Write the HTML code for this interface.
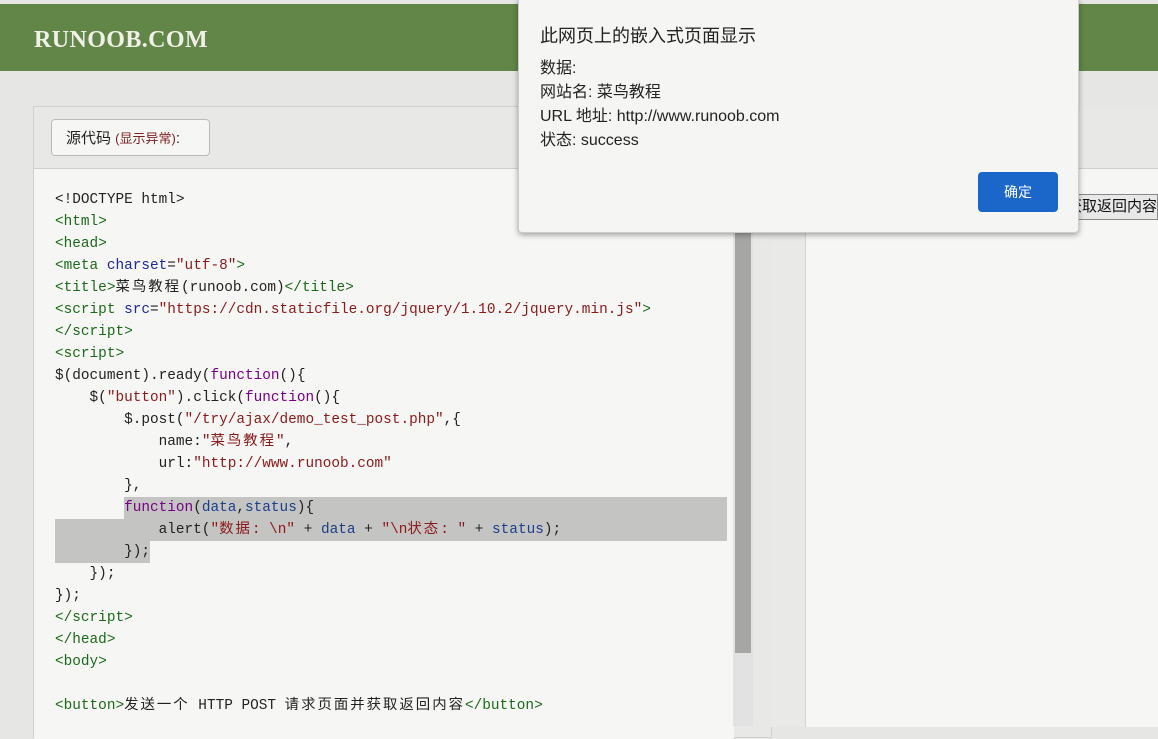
<!DOCTYPE html>
<html><head><meta charset="utf-8"><style>
body{margin:0;width:1158px;height:726px;overflow:hidden;background:#e6e6e4;position:relative;font-family:"Liberation Sans","Noto Sans CJK SC",sans-serif}
.hdr{position:absolute;left:0;top:4px;width:1158px;height:67px;background:#618647}
.logo{position:absolute;left:34px;top:23px;color:#f0f0e8;font:900 24px "Liberation Serif","Noto Serif CJK SC",serif;letter-spacing:0.4px}
.lp{position:absolute;left:33px;top:106px;width:737px;height:630px;border:1px solid #d0d0ce;background:#e8e8e6}
.lhead{position:absolute;left:0;top:0;width:737px;height:61px;border-bottom:1px solid #d0d0ce}
.btn{position:absolute;left:17px;top:12px;width:159px;height:37px;border:1px solid #bbb;border-radius:4px;background:#f6f6f4;font-size:15px;line-height:37px;padding-left:14px;box-sizing:border-box;color:#222}
.btn span{color:#7a1f1f;font-size:13px}
.code{position:absolute;left:0;top:62px;width:700px;height:570px;background:#f6f6f4}
pre{position:absolute;left:22px;top:21px;margin:0;font:14.4px/22px "Liberation Mono","Noto Sans CJK SC",monospace;color:#222}
.c{letter-spacing:2px}
.t{color:#1b6a1b}.a{color:#1b2a9a}.s{color:#8b1a1a}.k{color:#770088}.v{color:#1b3f8a}
.hl{position:absolute;background:#c4c4c2}
.sb{position:absolute;left:733px;top:168px;width:20px;height:558px;background:#e2e2e2}
.th{position:absolute;left:735px;top:228px;width:16px;height:425px;background:#a6a6a4}
.band{position:absolute;left:771px;top:107px;width:34px;height:620px;background:#e9e9e7;border-right:1px solid #d4d4d2}
.rp{position:absolute;left:806px;top:107px;width:352px;height:620px;background:#f6f6f4}
.rph{position:absolute;left:806px;top:107px;width:352px;height:61px;background:#e8e8e6;border-bottom:1px solid #d0d0ce}
.rb{position:absolute;left:1000px;top:194px;width:156px;height:24px;border:1px solid #888;background:#e8e8e8;font-size:15px;line-height:24px;color:#111;white-space:nowrap;overflow:hidden;direction:rtl;text-align:right}
.dlg{position:absolute;left:518px;top:-2px;width:559px;height:233px;background:#f5f5f3;border:1px solid #ccc;border-radius:0 0 4px 4px;box-shadow:0 2px 6px rgba(0,0,0,.35)}
.dt{position:absolute;left:21px;top:23px;font-size:18px;color:#222}
.dm{position:absolute;left:21px;top:58px;font-size:16px;line-height:24px;color:#222}
.ok{position:absolute;left:459px;top:173px;width:80px;height:40px;background:#1a66c9;border-radius:4px;color:#fff;font-size:14px;text-align:center;line-height:40px}
</style></head><body>
<div class="hdr"><div class="logo">RUNOOB.COM</div></div>
<div class="lp"><div class="lhead"><div class="btn">源代码 <span>(显示异常)</span>:</div></div>
<div class="code"></div></div>
<div class="hl" style="left:124px;top:497px;width:603px;height:22px"></div>
<div class="hl" style="left:55px;top:519px;width:672px;height:22px"></div>
<div class="hl" style="left:55px;top:541px;width:95px;height:22px"></div>
<pre style="left:55px;top:189px"><span>&lt;!DOCTYPE html&gt;</span>
<span class="t">&lt;html&gt;</span>
<span class="t">&lt;head&gt;</span>
<span class="t">&lt;meta</span> <span class="a">charset</span>=<span class="s">"utf-8"</span><span class="t">&gt;</span>
<span class="t">&lt;title&gt;</span><span class="c">菜鸟教程</span>(runoob.com)<span class="t">&lt;/title&gt;</span>
<span class="t">&lt;script</span> <span class="a">src</span>=<span class="s">"https://cdn.staticfile.org/jquery/1.10.2/jquery.min.js"</span><span class="t">&gt;</span>
<span class="t">&lt;/script&gt;</span>
<span class="t">&lt;script&gt;</span>
$(document).ready(<span class="k">function</span>(){
    $(<span class="s">"button"</span>).click(<span class="k">function</span>(){
        $.post(<span class="s">"/try/ajax/demo_test_post.php"</span>,{
            name:<span class="s">"<span class="c">菜鸟教程</span>"</span>,
            url:<span class="s">"http://www.runoob.com"</span>
        },
        <span class="k">function</span>(<span class="v">data</span>,<span class="v">status</span>){
            alert(<span class="s">"<span class="c">数据</span>: \n"</span> + <span class="v">data</span> + <span class="s">"\n<span class="c">状态</span>: "</span> + <span class="v">status</span>);
        });
    });
});
<span class="t">&lt;/script&gt;</span>
<span class="t">&lt;/head&gt;</span>
<span class="t">&lt;body&gt;</span>

<span class="t">&lt;button&gt;</span><span class="c">发送一个</span> HTTP POST <span class="c">请求页面并获取返回内容</span><span class="t">&lt;/button&gt;</span></pre>
<div class="sb"></div><div class="th"></div>
<div class="band"></div>
<div class="rp"></div><div class="rph"></div>
<div class="rb">请求页面并获取返回内容</div>
<div class="dlg">
<div class="dt">此网页上的嵌入式页面显示</div>
<div class="dm">数据:<br>网站名: 菜鸟教程<br>URL 地址: http://www.runoob.com<br>状态: success</div>
<div class="ok">确定</div>
</div>
</body></html>
